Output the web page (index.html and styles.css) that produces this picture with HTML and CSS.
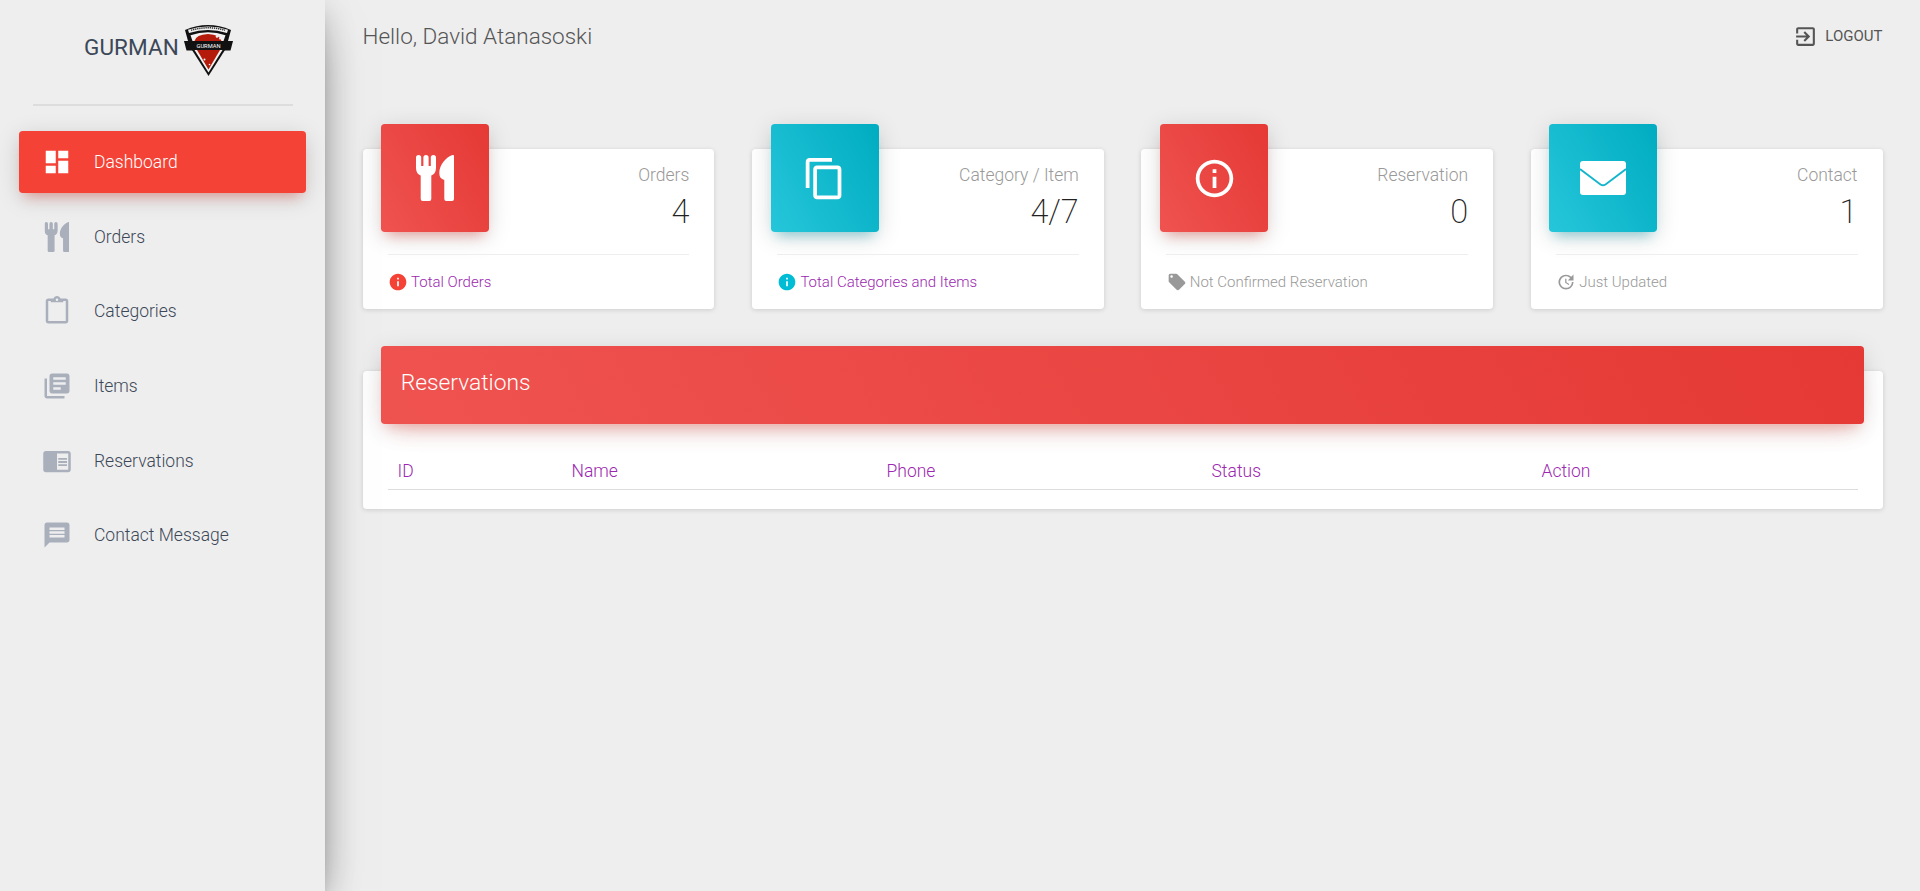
FILE: index.html
```html
<!DOCTYPE html>
<html lang="en">
<head>
<meta charset="utf-8">
<title>Gurman Dashboard</title>
<link rel="stylesheet" href="styles.css">
</head>
<body>
<svg class="defs" width="0" height="0" aria-hidden="true">
  <symbol id="cutlery" viewBox="0 0 38 46">
    <path d="M0 2.500A2.600 2.500 0 0 1 5.200 2.500V11H7.400V2.500A2.600 2.500 0 0 1 12.600 2.500V11H14.800V2.500A2.600 2.500 0 0 1 20 2.500V13C20 17 18 19.500 15.300 20.500V44A2 2 0 0 1 13.300 46H6.700A2 2 0 0 1 4.700 44V20.500C2 19.500 0 17 0 13Z"/>
    <path d="M38 1V44A2 2 0 0 1 36 46H30.300A2 2 0 0 1 28.300 44V25C25 24 23.300 22 23.300 18C23.300 10 30 2 36.500 0C37.500 0 38 .3 38 1Z"/>
  </symbol>
</svg>
<div class="layout">
  <aside class="sidebar">
    <div class="brand">
      <span class="brand-name">GURMAN</span>
      <svg class="brand-logo" viewBox="0 0 49 53">
        <path fill="#111" d="M1 7Q24-3 47 7L44 18H4Z"/>
        <path fill="#efefef" d="M4 6.800Q24 .4 44 6.800L43 10Q24 3.800 5 10Z"/>
        <path fill="none" stroke="#333" stroke-width="1.500" stroke-dasharray="1.300 .8" d="M7 7.200Q24 2.400 41 7.200"/>
        <path fill="#f2f2f2" d="M6.500 12.200Q24 6.400 41.500 12.200L39.500 18H8.500Z"/>
        <path fill="#b51b0b" d="M10.500 18Q12 11.500 24 11Q36 11.500 37.500 18Z"/>
        <circle cx="33" cy="13.500" r="1.300" fill="#f2f2f2"/>
        <circle cx="36" cy="15.500" r="1" fill="#f2f2f2"/>
        <path fill="#111" d="M0 18H49L46.500 27.500H2.500Z"/>
        <text class="logo-text" x="12.500" y="24.600" textLength="24" lengthAdjust="spacingAndGlyphs">GURMAN</text>
        <path fill="#111" d="M8 27H41L24.500 53Z"/>
        <path fill="#f2f2f2" d="M10.500 27H38.500L24.500 49.500Z"/>
        <path fill="#b51b0b" d="M13 27H36L24.500 46.500Z"/>
        <circle cx="20.500" cy="36.500" r="1" fill="#f2f2f2"/>
        <circle cx="25.500" cy="41.500" r=".8" fill="#f2f2f2"/>
      </svg>
    </div>
    <div class="brand-rule"></div>
    <nav class="nav">
      <a class="nav-item is-active"><svg class="nav-icon" viewBox="0 0 24 24"><path d="M3 13h8V3H3v10zm0 8h8v-6H3v6zm10 0h8V11h-8v10zm0-18v6h8V3h-8z"/></svg><span>Dashboard</span></a>
      <a class="nav-item"><svg class="nav-icon nav-cutlery"><use href="#cutlery"/></svg><span>Orders</span></a>
      <a class="nav-item"><svg class="nav-icon" viewBox="0 0 24 24"><path d="M19 2h-4.180C14.400.84 13.300 0 12 0c-1.300 0-2.400.84-2.820 2H5c-1.100 0-2 .9-2 2v16c0 1.100.9 2 2 2h14c1.100 0 2-.9 2-2V4c0-1.100-.9-2-2-2zm-7 0c.55 0 1 .45 1 1s-.45 1-1 1-1-.45-1-1 .45-1 1-1zm7 18H5V4h2v1h10V4h2v16z"/></svg><span>Categories</span></a>
      <a class="nav-item"><svg class="nav-icon" viewBox="0 0 24 24"><path d="M4 6H2v14c0 1.100.9 2 2 2h14v-2H4V6zm16-4H8c-1.100 0-2 .9-2 2v12c0 1.100.9 2 2 2h12c1.100 0 2-.9 2-2V4c0-1.100-.9-2-2-2zm-1 9H9V9h10v2zm-4 4H9v-2h6v2zm4-8H9V5h10v2z"/></svg><span>Items</span></a>
      <a class="nav-item"><svg class="nav-icon" viewBox="0 0 24 24"><path d="M13 12h7v1.500h-7zm0-2.500h7V11h-7zm0 5h7V16h-7zM21 4H3c-1.100 0-2 .9-2 2v13c0 1.100.9 2 2 2h18c1.100 0 2-.9 2-2V6c0-1.100-.9-2-2-2zm0 15h-9V6h9v13z"/></svg><span>Reservations</span></a>
      <a class="nav-item"><svg class="nav-icon" viewBox="0 0 24 24"><path d="M20 2H4c-1.100 0-1.990.9-1.990 2L2 22l4-4h14c1.100 0 2-.9 2-2V4c0-1.100-.9-2-2-2zm-2 12H6v-2h12v2zm0-3H6V9h12v2zm0-3H6V6h12v2z"/></svg><span>Contact Message</span></a>
    </nav>
  </aside>

  <main class="main">
    <header class="topbar">
      <span class="greeting">Hello, David Atanasoski</span>
      <a class="logout"><svg class="logout-icon" viewBox="0 0 24 24"><path d="M10.090 15.590L11.500 17l5-5-5-5-1.410 1.410L12.670 11H3v2h9.670l-2.580 2.590zM19 3H5c-1.110 0-2 .9-2 2v4h2V5h14v14H5v-4H3v4c0 1.100.89 2 2 2h14c1.100 0 2-.9 2-2V5c0-1.100-.9-2-2-2z"/></svg><span>LOGOUT</span></a>
    </header>

    <section class="stats">
      <article class="card stat">
        <div class="stat-head">
          <div class="stat-icon red"><svg class="cutlery-lg"><use href="#cutlery"/></svg></div>
          <div class="stat-text"><p class="stat-title">Orders</p><p class="stat-value">4</p></div>
        </div>
        <div class="stat-foot"><svg class="foot-icon ic-red" viewBox="0 0 24 24"><path d="M12 2C6.480 2 2 6.480 2 12s4.480 10 10 10 10-4.480 10-10S17.520 2 12 2zm1 15h-2v-6h2v6zm0-8h-2V7h2v2z"/></svg><a class="foot-link">Total Orders</a></div>
      </article>
      <article class="card stat">
        <div class="stat-head">
          <div class="stat-icon cyan"><svg class="glyph-lg" viewBox="0 0 24 24"><path d="M16 1H4c-1.100 0-2 .9-2 2v14h2V3h12V1zm3 4H8c-1.100 0-2 .9-2 2v14c0 1.100.9 2 2 2h11c1.100 0 2-.9 2-2V7c0-1.100-.9-2-2-2zm0 16H8V7h11v14z"/></svg></div>
          <div class="stat-text"><p class="stat-title">Category / Item</p><p class="stat-value">4/7</p></div>
        </div>
        <div class="stat-foot"><svg class="foot-icon ic-cyan" viewBox="0 0 24 24"><path d="M12 2C6.480 2 2 6.480 2 12s4.480 10 10 10 10-4.480 10-10S17.520 2 12 2zm1 15h-2v-6h2v6zm0-8h-2V7h2v2z"/></svg><a class="foot-link">Total Categories and Items</a></div>
      </article>
      <article class="card stat">
        <div class="stat-head">
          <div class="stat-icon red"><svg class="glyph-lg" viewBox="0 0 24 24"><path d="M11 17h2v-6h-2v6zm1-15C6.480 2 2 6.480 2 12s4.480 10 10 10 10-4.480 10-10S17.520 2 12 2zm0 18c-4.410 0-8-3.590-8-8s3.590-8 8-8 8 3.590 8 8-3.590 8-8 8zM11 9h2V7h-2v2z"/></svg></div>
          <div class="stat-text"><p class="stat-title">Reservation</p><p class="stat-value">0</p></div>
        </div>
        <div class="stat-foot"><svg class="foot-icon ic-grey" viewBox="0 0 24 24"><path d="M21.410 11.580l-9-9C12.050 2.220 11.550 2 11 2H4c-1.100 0-2 .9-2 2v7c0 .55.22 1.050.59 1.420l9 9c.36.36.86.58 1.410.58.55 0 1.050-.22 1.410-.59l7-7c.37-.36.59-.86.59-1.410 0-.55-.23-1.060-.59-1.420zM5.500 7C4.670 7 4 6.330 4 5.500S4.670 4 5.500 4 7 4.670 7 5.500 6.330 7 5.500 7z"/></svg><span>Not Confirmed Reservation</span></div>
      </article>
      <article class="card stat">
        <div class="stat-head">
          <div class="stat-icon cyan"><svg class="envelope" viewBox="0 0 46 34"><rect width="46" height="34" rx="3" fill="#fff"/><path d="M0 8L20.500 23.500Q23 25 25.500 23.500L46 8" fill="none" stroke="#12b5cb" stroke-width="1.800"/></svg></div>
          <div class="stat-text"><p class="stat-title">Contact</p><p class="stat-value">1</p></div>
        </div>
        <div class="stat-foot"><svg class="foot-icon ic-grey" viewBox="0 0 24 24"><path d="M21 10.120h-6.780l2.740-2.820c-2.730-2.700-7.150-2.800-9.880-.1-2.730 2.710-2.730 7.080 0 9.790 2.730 2.710 7.150 2.710 9.880 0C18.320 15.650 19 14.080 19 12.100h2c0 1.980-.88 4.550-2.640 6.290-3.510 3.480-9.210 3.480-12.720 0-3.500-3.470-3.530-9.110-.02-12.580 3.510-3.470 9.140-3.470 12.650 0L21 3v7.120zM12.500 8v4.250l3.500 2.080-.72 1.210L11 13V8h1.500z"/></svg><span>Just Updated</span></div>
      </article>
    </section>

    <section class="card panel">
      <h2 class="panel-head">Reservations</h2>
      <div class="panel-body">
        <table class="table">
          <colgroup><col class="col-id"><col class="col-name"><col class="col-phone"><col class="col-status"><col></colgroup>
          <thead><tr><th>ID</th><th>Name</th><th>Phone</th><th>Status</th><th>Action</th></tr></thead>
        </table>
      </div>
    </section>
  </main>
</div>
</body>
</html>
```
FILE: styles.css
```css
* { box-sizing: border-box; }
html, body { height: 100%; }
body {
  margin: 0;
  background: #eee;
  color: #3c4858;
  font-family: Roboto, "Liberation Sans", sans-serif;
  font-weight: 300;
  overflow: hidden;
}
.defs { position: absolute; }
p { margin: 0; }

.layout { display: flex; height: 891px; }

.sidebar {
  flex: 0 0 325px;
  background: #eee;
  box-shadow: 0 20px 48px -15px rgba(0,0,0,.56), 0 5px 31px 0 rgba(0,0,0,.12), 0 10px 12px -6px rgba(0,0,0,.2);
  position: relative;
  z-index: 2;
}
.brand {
  height: 104px;
  padding: 23px 0 0 84px;
  display: flex;
  align-items: flex-start;
  gap: 5px;
}
.brand-name {
  font-size: 22.500px;
  font-weight: 400;
  line-height: 48px;
  color: #3c4858;
  letter-spacing: .1px;
}
.brand-logo { width: 49px; height: 53px; flex: none; }
.logo-text { font: 400 4.800px Roboto, sans-serif; fill: #fff; }
.brand-rule { height: 1.500px; margin: 0 32px 0 33px; background: #ddd; }

.nav { display: flex; flex-direction: column; gap: 12.600px; margin: 25.700px 19px 0; }
.nav-item {
  height: 62px;
  padding-left: 22.500px;
  display: flex;
  align-items: center;
  gap: 22.500px;
  border-radius: 3.750px;
  font-size: 17.500px;
  color: #3c4858;
}
.nav-icon { width: 30px; height: 30px; flex: none; fill: #a9afbb; }
.nav-cutlery { padding: 0 2.500px; }
.is-active {
  background: #f44336;
  color: #fff;
  box-shadow: 0 5px 25px 0 rgba(0,0,0,.14), 0 9px 12px -6px rgba(244,67,54,.4);
}
.is-active .nav-icon { fill: #fff; }

.main { flex: 1; min-width: 0; padding: 0 37.500px; }
.topbar {
  height: 72px;
  display: flex;
  align-items: center;
  justify-content: space-between;
}
.greeting { font-size: 22.500px; color: #555; }
.logout { display: flex; align-items: center; gap: 7px; font-size: 15px; font-weight: 400; color: #555; }
.logout-icon { width: 25px; height: 25px; fill: #555; }

.stats {
  display: grid;
  grid-template-columns: repeat(4, 1fr);
  column-gap: 37.500px;
  margin-top: 77px;
}
.card {
  background: #fff;
  border-radius: 3.750px;
  box-shadow: 0 1px 5px 0 rgba(0,0,0,.14);
}
.stat { height: 160px; display: flex; flex-direction: column; }
.stat-head {
  height: 105px;
  padding: 0 25px 0 18.750px;
  display: flex;
  justify-content: space-between;
  align-items: flex-start;
}
.stat-icon {
  width: 108px;
  height: 108px;
  margin-top: -25px;
  border-radius: 3.750px;
  display: flex;
  align-items: center;
  justify-content: center;
  fill: #fff;
}
.red {
  background: linear-gradient(60deg, #ef5350, #e53935);
  box-shadow: 0 5px 25px 0 rgba(0,0,0,.14), 0 9px 12px -6px rgba(244,67,54,.4);
}
.cyan {
  background: linear-gradient(60deg, #26c6da, #00acc1);
  box-shadow: 0 5px 25px 0 rgba(0,0,0,.14), 0 9px 12px -6px rgba(0,172,193,.4);
}
.cutlery-lg { width: 38px; height: 46px; }
.glyph-lg { width: 45px; height: 45px; }
.envelope { width: 46px; height: 34px; }
.stat-text { text-align: right; padding-top: 12px; }
.stat-title { font-size: 17.500px; line-height: 28px; color: #999; }
.stat-value { font-size: 32.500px; font-weight: 200; line-height: 46px; color: #222; }
.stat-foot {
  flex: 1;
  margin: 0 25px;
  padding-left: 0.500px;
  border-top: 1px solid #eee;
  display: flex;
  align-items: center;
  gap: 3px;
  font-size: 15px;
  color: #999;
}
.foot-icon { width: 20px; height: 20px; flex: none; }
.ic-red { fill: #f44336; }
.ic-cyan { fill: #00bcd4; }
.ic-grey { fill: #999; }
.foot-link { color: #9c27b0; }

.panel { margin-top: 62px; height: 138px; }
.panel-head {
  position: relative;
  top: -25px;
  height: 78px;
  margin: 0 18.750px;
  padding: 0 0 5px 19.500px;
  display: flex;
  align-items: center;
  border-radius: 3.750px;
  background: linear-gradient(60deg, #ef5350, #e53935);
  box-shadow: 0 15px 25px -12px rgba(244,67,54,.28), 0 5px 25px 0 rgba(0,0,0,.12), 0 9px 10px -6px rgba(244,67,54,.2);
  color: #fff;
  font-size: 22.800px;
  font-weight: 300;
}
.panel-body { margin-top: -25px; padding: 27px 25px 0; }
.table { width: 100%; border-collapse: collapse; table-layout: fixed; }
.col-id { width: 174px; }
.col-name { width: 315px; }
.col-phone { width: 325px; }
.col-status { width: 330px; }
.table th {
  height: 38px;
  padding: 2px 10px 0;
  border-bottom: 1.500px solid #ddd;
  text-align: left;
  font-size: 17.500px;
  font-weight: 300;
  color: #9c27b0;
}
```
